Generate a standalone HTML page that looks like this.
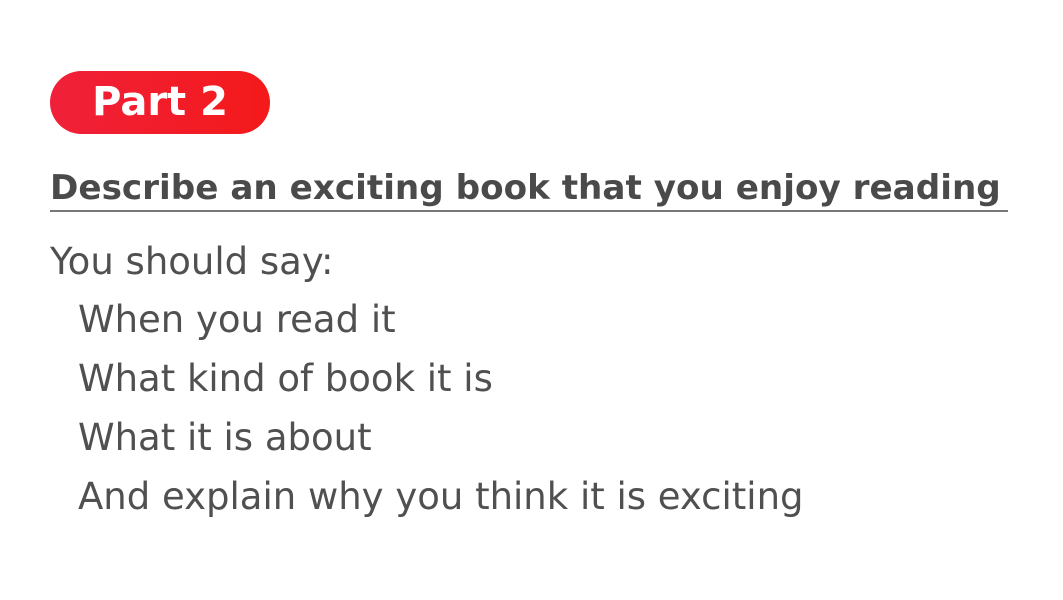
<!DOCTYPE html><html><head><style>
body{margin:0;width:1063px;height:600px;background:#fff;overflow:hidden;position:relative;font-family:"DejaVu Sans","Liberation Sans",sans-serif;}
.pill{position:absolute;left:50px;top:71px;width:220px;height:63px;border-radius:32px;background:linear-gradient(90deg,#f0203a,#f41a1a);color:#fff;font-weight:bold;font-size:40px;line-height:63px;text-align:center;}
.h{position:absolute;left:50px;top:166px;width:958px;font-weight:bold;font-size:34.2px;color:#4a4a4a;line-height:44px;border-bottom:2px solid #777;white-space:nowrap;}
.t{position:absolute;font-size:37px;color:#505050;white-space:nowrap;line-height:40px;}
</style></head><body>
<div class="pill">Part 2</div>
<div class="h">Describe an exciting book that you enjoy reading</div>
<div class="t" style="left:50px;top:242px">You should say:</div>
<div class="t" style="left:78px;top:300px">When you read it</div>
<div class="t" style="left:78px;top:359px">What kind of book it is</div>
<div class="t" style="left:78px;top:418px">What it is about</div>
<div class="t" style="left:78px;top:477px">And explain why you think it is exciting</div>
</body></html>
